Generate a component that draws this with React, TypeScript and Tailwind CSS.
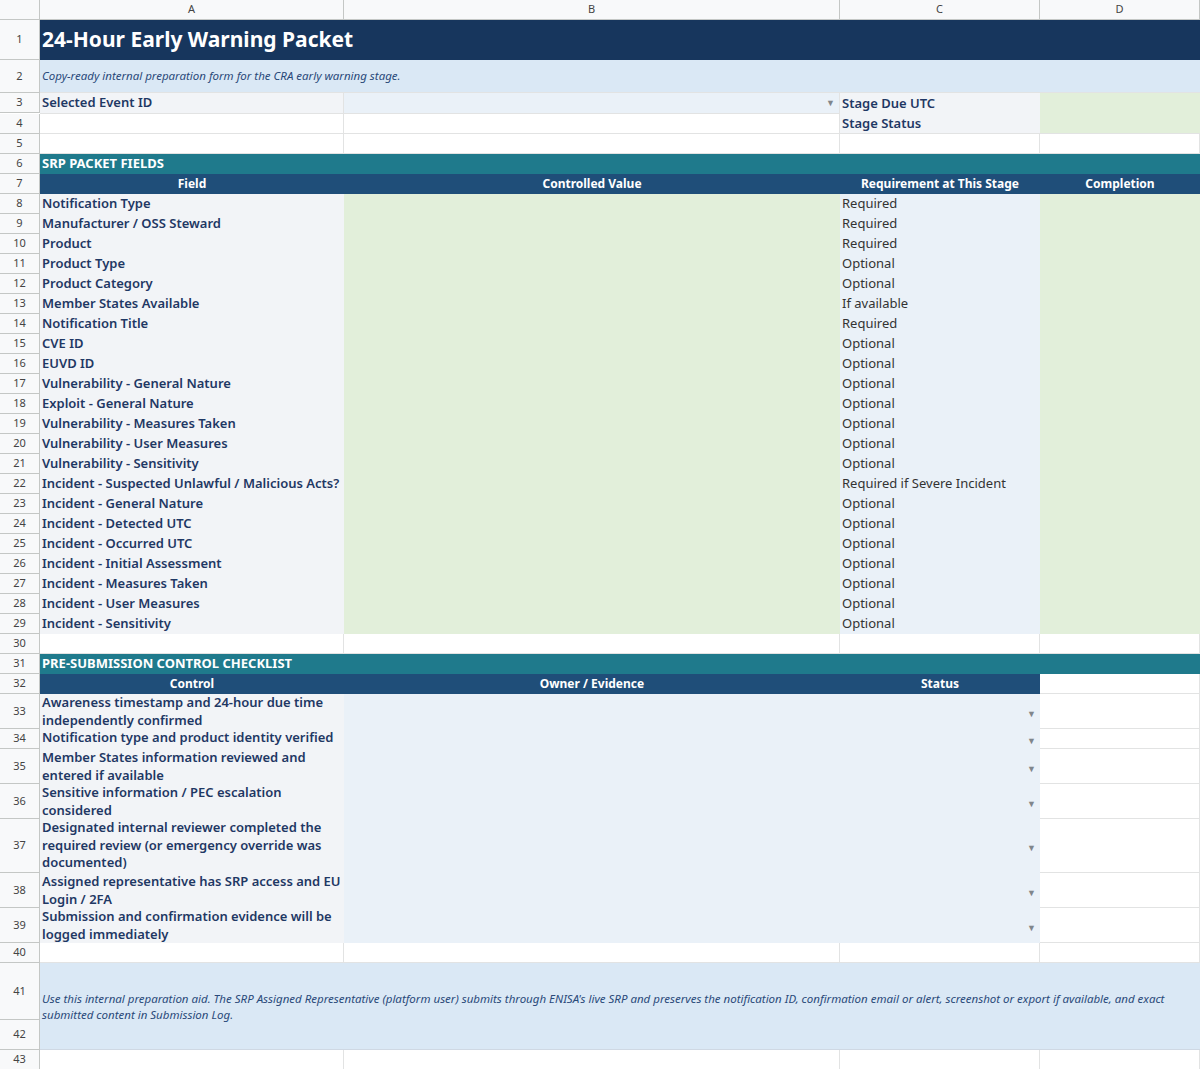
import React from "react";

const NAVY = "text-[#1f3864]";
const cols = "grid grid-cols-[40px_304px_496px_200px_160px]";

function RH({ n, h }: { n: number | string; h: number }) {
  return (
    <div
      className="flex items-center justify-center bg-[#f8f9fa] border-r border-b border-[#c4c7c5] text-[11px] text-[#444] font-['Liberation_Sans',sans-serif]"
      style={{ height: h }}
    >
      {n}
    </div>
  );
}

const Tri = () => <span className="text-[9px] text-[#80868b] leading-none">▼</span>;

const fields: [string, string][] = [
  ["Notification Type", "Required"],
  ["Manufacturer / OSS Steward", "Required"],
  ["Product", "Required"],
  ["Product Type", "Optional"],
  ["Product Category", "Optional"],
  ["Member States Available", "If available"],
  ["Notification Title", "Required"],
  ["CVE ID", "Optional"],
  ["EUVD ID", "Optional"],
  ["Vulnerability - General Nature", "Optional"],
  ["Exploit - General Nature", "Optional"],
  ["Vulnerability - Measures Taken", "Optional"],
  ["Vulnerability - User Measures", "Optional"],
  ["Vulnerability - Sensitivity", "Optional"],
  ["Incident - Suspected Unlawful / Malicious Acts?", "Required if Severe Incident"],
  ["Incident - General Nature", "Optional"],
  ["Incident - Detected UTC", "Optional"],
  ["Incident - Occurred UTC", "Optional"],
  ["Incident - Initial Assessment", "Optional"],
  ["Incident - Measures Taken", "Optional"],
  ["Incident - User Measures", "Optional"],
  ["Incident - Sensitivity", "Optional"],
];

const checks: [string, number][] = [
  ["Awareness timestamp and 24-hour due time independently confirmed", 35],
  ["Notification type and product identity verified", 20],
  ["Member States information reviewed and entered if available", 35],
  ["Sensitive information / PEC escalation considered", 35],
  ["Designated internal reviewer completed the required review (or emergency override was documented)", 54],
  ["Assigned representative has SRP access and EU Login / 2FA", 35],
  ["Submission and confirmation evidence will be logged immediately", 35],
];

const cell = "border-r border-b border-[#e2e3e3] overflow-hidden";

function Blank({ n }: { n: number }) {
  return (
    <div className={cols}>
      <RH n={n} h={20} />
      <div className={`${cell} bg-white`} />
      <div className={`${cell} bg-white`} />
      <div className={`${cell} bg-white`} />
      <div className={`${cell} bg-white`} />
    </div>
  );
}

export default function App() {
  return (
    <div className={`w-[1200px] h-[1069px] overflow-hidden bg-white font-['Lato',sans-serif] text-[13px] ${NAVY}`}>
      {/* column headers */}
      <div className={`${cols} h-[20px]`}>
        <div className="bg-[#f8f9fa] border-r border-b border-[#c4c7c5]" />
        {["A", "B", "C", "D"].map((c) => (
          <div key={c} className="bg-[#f8f9fa] border-r border-b border-[#c4c7c5] flex items-center justify-center text-[11px] text-[#444] font-['Liberation_Sans',sans-serif]">
            {c}
          </div>
        ))}
      </div>
      {/* row 1 */}
      <div className={cols}>
        <RH n={1} h={40} />
        <div className="col-span-4 bg-[#17365d] text-white font-bold text-[21px] flex items-center px-[2px]">
          24-Hour Early Warning Packet
        </div>
      </div>
      {/* row 2 */}
      <div className={cols}>
        <RH n={2} h={33} />
        <div className="col-span-4 bg-[#dae8f5] italic text-[11.5px] flex items-center px-[2px] text-[#2a4a7a] border-b border-[#e2e3e3]">
          Copy-ready internal preparation form for the CRA early warning stage.
        </div>
      </div>
      {/* rows 3-4 */}
      <div className={cols}>
        <RH n={3} h={20} />
        <div className={`${cell} bg-[#f2f4f7] font-semibold px-[2px] flex items-center`}>Selected Event ID</div>
        <div className={`${cell} bg-[#eaf1f8] flex items-center justify-end pr-[4px]`}><Tri /></div>
        <div className="bg-[#f2f4f7] font-semibold px-[2px] flex items-center">Stage Due UTC</div>
        <div className="bg-[#e2efda]" />
      </div>
      <div className={cols}>
        <RH n={4} h={20} />
        <div className={`${cell} bg-white`} />
        <div className={`${cell} bg-white`} />
        <div className="bg-[#f2f4f7] font-semibold px-[2px] flex items-center border-b border-[#e2e3e3]">Stage Status</div>
        <div className="bg-[#e2efda] border-b border-[#e2e3e3]" />
      </div>
      <Blank n={5} />
      <div className={cols}>
        <RH n={6} h={20} />
        <div className="col-span-4 bg-[#1f7a8c] text-white font-bold flex items-center px-[2px]">SRP PACKET FIELDS</div>
      </div>
      <div className={cols}>
        <RH n={7} h={20} />
        {["Field", "Controlled Value", "Requirement at This Stage", "Completion"].map((t) => (
          <div key={t} className="bg-[#1f4e79] text-white font-bold text-[12px] flex items-center justify-center">{t}</div>
        ))}
      </div>
      {fields.map(([f, r], i) => (
        <div key={f} className={cols}>
          <RH n={8 + i} h={20} />
          <div className="bg-[#f2f4f7] font-semibold px-[2px] flex items-center whitespace-nowrap">{f}</div>
          <div className="bg-[#e2efda]" />
          <div className="bg-[#eaf1f8] px-[2px] flex items-center text-[#333] whitespace-nowrap">{r}</div>
          <div className="bg-[#e2efda]" />
        </div>
      ))}
      <Blank n={30} />
      <div className={cols}>
        <RH n={31} h={20} />
        <div className="col-span-4 bg-[#1f7a8c] text-white font-bold flex items-center px-[2px]">PRE-SUBMISSION CONTROL CHECKLIST</div>
      </div>
      <div className={cols}>
        <RH n={32} h={20} />
        <div className="bg-[#1f4e79] text-white font-bold text-[12px] flex items-center justify-center">Control</div>
        <div className="bg-[#1f4e79] text-white font-bold text-[12px] flex items-center justify-center">Owner / Evidence</div>
        <div className="bg-[#1f4e79] text-white font-bold text-[12px] flex items-center justify-center">Status</div>
        <div className={`${cell} bg-white`} />
      </div>
      {checks.map(([t, h], i) => (
        <div key={t} className={cols}>
          <RH n={33 + i} h={h} />
          <div className="bg-[#f2f4f7] font-semibold px-[2px] leading-[17.5px] overflow-hidden" style={{ height: h }}>{t}</div>
          <div className="col-span-2 bg-[#eaf1f8] flex items-center justify-end pr-[4px] pt-[3px]"><Tri /></div>
          <div className={`${cell} bg-white`} />
        </div>
      ))}
      <Blank n={40} />
      <div className="grid grid-cols-[40px_1160px]">
        <div className="flex flex-col">
          <RH n={41} h={57} />
          <RH n={42} h={30} />
        </div>
        <div className="bg-[#dae8f5] italic text-[11.5px] text-[#2a4a7a] px-[2px] pt-[28px] leading-[16px] border-b border-[#cfd8e3]">
          Use this internal preparation aid. The SRP Assigned Representative (platform user) submits through ENISA's live SRP and preserves the notification ID, confirmation email or alert, screenshot or export if available, and exact submitted content in Submission Log.
        </div>
      </div>
      <Blank n={43} />
    </div>
  );
}
